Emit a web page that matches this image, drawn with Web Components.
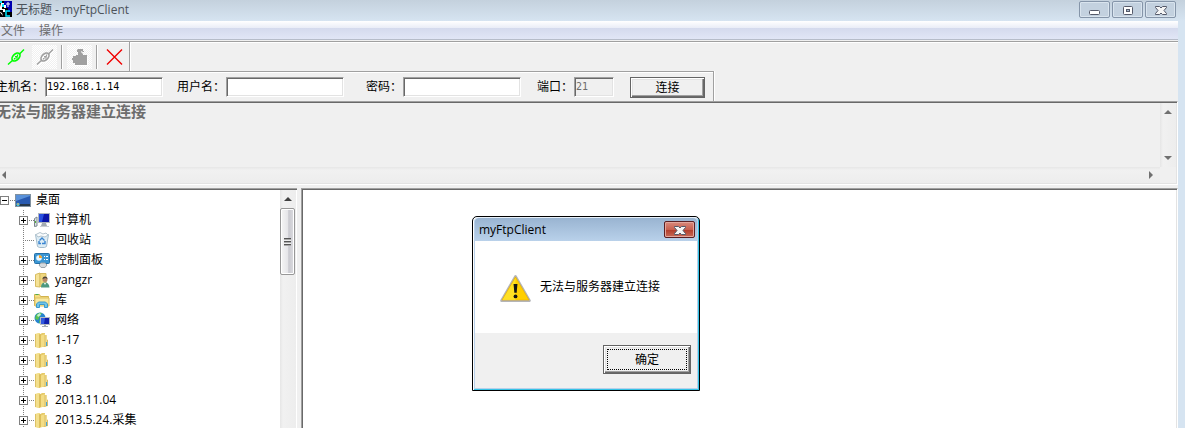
<!DOCTYPE html>
<html lang="zh-CN">
<head>
<meta charset="utf-8">
<title>无标题 - myFtpClient</title>
<style>
    body{
        margin: 0;
        overflow: hidden;
        font: 12px/20px "Open Sans", "Noto Sans CJK SC", sans-serif;
        color: #000;
        --face: #f0f0f0;
        --shade: #a0a0a0;
        --dark: #696969;
        --light: #e3e3e3;
    }
</style>
</head>
<body>
<ftp-window></ftp-window>

<script>
// shared by every component
const _base = /* html */`
    <style>
        *{ box-sizing: border-box; }
        :host{ display: block; box-sizing: border-box; }
        button, input{
            font: inherit;
            color: inherit;
            margin: 0;
            padding: 0;
            border: 0;
            border-radius: 0;
            background: none;
            outline: none;
        }
    </style>
`

function define(name, template, setup) {
    customElements.define(name, class extends HTMLElement{
        constructor() {
            super();
            const shadow = this.attachShadow({ mode: "open" });
            shadow.innerHTML = _base + (typeof template == "function" ? template(this) : template);
            if (setup) setup(this, shadow);
        }
    });
}

const plug = `
    <path d="M0 15.500 5 11M11 5.500 16 .5" stroke-width="1.500"/>
    <ellipse cx="8" cy="8" rx="4.800" ry="3" transform="rotate(-45 8 8)" stroke-width="1.700"/>
    <path d="M7 7.500h2v1.500H7M9.500 5.500v2M6.500 9v1.500" stroke-width="1.200"/>`;

const ICONS = {
    app: `<rect width="16" height="16" fill="#000"/>
        <path d="M8 0h8v11h-4V7H8z" fill="#0000b0"/>
        <path d="M5 2h3v2h2v3H8V5H6v3h3v3H7V9H4V6M3 10l3 2 1 3" fill="#fff"/>
        <path d="M6 3h2v3H6zM4 0h2v2H4z" fill="#00e5ff"/>
        <path d="M14 10h-4v5h4" fill="none" stroke="#00e5ff" stroke-width="1.500"/>
        <path d="M12 1v5M10 3h4" stroke="#fff"/>`,
    link: `<g fill="none" stroke="#00ff00">${plug}</g>`,
    unlink: `<g fill="none" stroke="#fff" transform="translate(1 1)">${plug}</g><g fill="none" stroke="#a0a0a0">${plug}</g>`,
    stop: `<path d="M6 6V3H5V1l1-1h5v2h1v1h-1L9 2v1l2 2v1h4v10H3v-2H1v-3H0V9h1V7h3V6z" fill="#a0a0a0"/>
        <path d="M15.500 7v9.500H3" fill="none" stroke="#fff"/>`,
    cross: `<path d="M0 .5 7.500 8l7.500 7.500M0 15.500 7.500 8 15 .5" fill="none" stroke="#f00000" stroke-width="1.400"/>`,
    desktop: `<rect x=".5" y="2.500" width="15" height="12" fill="#2459ad" stroke="#81919f"/>
        <path d="M1 3h14v4L5 12H1z" fill="#5991d9"/><path d="M1 9 15 4v8H1z" fill="#2859b0"/>
        <path d="M1 12h14v2H1z" fill="#26374a"/><circle cx="3" cy="12.500" r="1.700" fill="#43c0e6"/><path d="M3 11v2" stroke="#f3a23c"/>`,
    computer: `<path d="M.5 6.500 3 5v9l-2.500.5z" fill="#dce3e6" stroke="#7b878e"/><path d="M1.500 9v2" stroke="#56b13b"/>
        <rect x="4.500" y="1.500" width="11" height="9" fill="#0b16a8" stroke="#b0b6bd"/>
        <path d="M5 2h5L8 10H5z" fill="#284fe0"/><path d="M8 11h4l1 3H7z" fill="#a3abb2"/><path d="M6 14.500h9" stroke="#c8cdd2"/>`,
    bin: `<path d="M1.500 2.500h13l-2 12-2 1h-5l-2-1z" fill="#dcecf5" stroke="#a5bccb"/>
        <path d="M2 2.500 6 .5l3 1.500 3-1 2 2-3 2-4-1-3 1z" fill="#fafcfd" stroke="#b3c3cd"/>
        <path d="M5.500 8.500 8 6l2.500 2.500M11 9v2.500H8M7 11.500H5V9" fill="none" stroke="#3984d1" stroke-width="1.400"/>`,
    control: `<rect x=".5" y="1.500" width="15" height="10" rx="1" fill="#3b96d3" stroke="#2570a8"/>
        <circle cx="5" cy="6" r="2.800" fill="#e9f6fd"/><path d="M5 6V3a3 3 0 0 1 3 3z" fill="#f4a32a"/>
        <path d="M10 4.500h1M12 4.500h2M10 7.500h1M12 7.500h2" stroke="#fff"/>
        <path d="M5 13l2-2h4l2 2-2 2.500H7z" fill="#d5dade" stroke="#9ba4ab"/>`,
    user: `<path d="M1.500 2.500 6 1v14l-4.500-.5z" fill="#f5e296" stroke="#d7bc61"/><path d="M6 1.500h6v13H6z" fill="#efd77f" stroke="#d7bc61"/>
        <circle cx="11" cy="7.500" r="2.500" fill="#b98966"/><path d="M8.500 7a2.500 2.500 0 0 1 5 0l-2-1z" fill="#4c4438"/>
        <path d="M7 15.500q0-5 4-5t4.500 5z" fill="#4d9880"/><path d="M10 11l1 2 1-2z" fill="#fff"/>`,
    library: `<path d="M.5 2.500h5l1 2h8v9H.5z" fill="#f5dd80" stroke="#d2b34e"/><path d="M1.500 2.500h3" stroke="#4cae51"/>
        <path d="M1 6h14v8H1z" fill="#f9e9a0" stroke="#dec163"/>
        <path d="M2.500 15.500V12l2-2h7l2 2v3.500h-3V12.500H5.500v3z" fill="#70c4e8" stroke="#3a99cb"/>`,
    network: `<circle cx="6" cy="6" r="5.500" fill="#2684cf"/><path d="M2 3q3-3 6-2L6 4 4 8 1 7zM6 6l3 1-2 4H5z" fill="#5bc34f"/>
        <path d="M3 3 6 1l1 2-3 2z" fill="#c6f0d2"/><rect x="6.500" y="5.500" width="9" height="7" fill="#1020ad" stroke="#b3bac2"/>
        <path d="M7 6h4l-1 6H7z" fill="#3158de"/><path d="M10 13h2v1h2v1H8v-1h2z" fill="#a3abb2"/>`,
    folder: `<path d="M1 2 4 1h2v15H4l-3-1z" fill="#f3df8c"/>
        <path d="M1.500 2v13" stroke="#dcc165"/>
        <path d="M5 3 8 1h3v14H7l-2 1z" fill="#e6cb6a"/>
        <path d="M7 3.500 11 2v12l-4 1.500z" fill="#f3dd86"/>
        <path d="M6 2v13.500" stroke="#d2b24f"/>
        <path d="M11 3h2v4l1 1v6l-3 1z" fill="#f0dc92"/>
        <path d="M11 3v12M13.500 8v6" stroke="#d9be66"/>
        <path d="M12.500 10v4" stroke="#45a5da"/>`,
    min: `<rect x="2.500" y="8.500" width="10" height="4" rx="1" fill="#fff" stroke="#545969"/>`,
    max: `<rect x="3.500" y="4.500" width="9" height="8" rx="1" fill="#fff" stroke="#545969"/><rect x="6.500" y="7.500" width="3" height="2" fill="#a9bace" stroke="#545969"/>`,
    close: `<path d="M2.500 4.500h4L8 6l1.500-1.500h4v1L11 8.500l2.500 3v1h-4L8 11l-1.500 1.500h-4v-1L5 8.500l-2.500-3z" fill="#f5f5f5" stroke="#545969"/>`,
    warning: `<path d="M8 2.300 15.200 14.800H.8z" fill="#ffd20d" stroke="#b4b5b8" stroke-width="1.400" stroke-linejoin="round"/>
        <path d="M8 2.500 15 14.500H1z" fill="#ffcf00" stroke="#e5a900" stroke-width=".3"/>
        <path d="M8 3v11.500H1.300z" fill="#ffeb3c" opacity=".6"/>
        <path d="M7 6.200h2l-.4 4.500H7.400z" fill="#141414"/><circle cx="8" cy="12.600" r="1" fill="#141414"/>`
};

define("win-icon", /* html */`
    <style>
        :host{ flex: none; width: 16px; height: 16px; }
        svg{ display: block; width: 100%; height: 100%; overflow: visible; }
    </style>
    <svg viewBox="0 0 16 16" aria-hidden="true"></svg>
`, (el, shadow) => {
    shadow.querySelector("svg").innerHTML = ICONS[el.getAttribute("name")];
});

define("title-bar", /* html */`
    <style>
        :host{
            display: flex;
            height: 21px;
            overflow: hidden;
            color: #4c535a;
            background: linear-gradient(#c4d1dd, #d6e4f1);
        }
        .app{ margin: 1px 4px 0 -4px; }
        .text{ flex: 1; }
        .buttons{ display: flex; gap: 2px; padding: 1px 9px 0 0; }
        button{
            width: 31px;
            height: 17px;
            display: grid;
            place-content: center;
            border: 1px solid #8595a9;
            border-radius: 2px;
            box-shadow: inset 0 0 0 1px #d9e4ee;
            background: #c3d1df;
        }
    </style>
    <win-icon class="app" name="app"></win-icon>
    <div class="text"><slot></slot></div>
    <div class="buttons">
        <button aria-label="最小化"><win-icon name="min"></win-icon></button>
        <button aria-label="最大化"><win-icon name="max"></win-icon></button>
        <button aria-label="关闭"><win-icon name="close"></win-icon></button>
    </div>
`);

define("menu-bar", /* html */`
    <style>
        :host{
            display: flex;
            gap: 14px;
            padding-left: 1px;
            height: 19px;
            color: #6d6d6d;
            border-bottom: 1px solid #b6bcc9;
            background: linear-gradient(#fff, #e9edf7 7px, #d4daed 7px, #e1e6f6);
        }
        button{ line-height: 20px; }
    </style>
    <button>文件</button>
    <button>操作</button>
`);

define("tool-bar", /* html */`
    <style>
        :host{
            display: flex;
            align-items: center;
            gap: 4px;
            padding-left: 3px;
            margin-top: 1px;
            height: 30px;
            border-top: 1px solid var(--shade);
            box-shadow: inset 0 1px #fff;
        }
        button{
            width: 25px;
            height: 24px;
            display: grid;
            place-content: center;
        }
        button:disabled{ background: repeating-conic-gradient(#fff 0 25%, #f0f0f0 0 50%) 0 0 / 2px 2px; }
        i{ width: 2px; height: 24px; border-left: 1px solid var(--shade); border-right: 1px solid #fff; }
        .end{ align-self: stretch; height: auto; margin-left: -2px; }
    </style>
    <button aria-label="连接"><win-icon name="link"></win-icon></button>
    <button aria-label="断开" disabled><win-icon name="unlink"></win-icon></button>
    <i></i>
    <button aria-label="停止" disabled><win-icon name="stop"></win-icon></button>
    <i></i>
    <button aria-label="删除"><win-icon name="cross"></win-icon></button>
    <i class="end"></i>
`);

define("connect-bar", /* html */`
    <style>
        :host{
            width: max-content;
            height: 30px;
            padding: 5px 8px 0 0;
            border-top: 1px solid var(--shade);
            border-right: 1px solid var(--shade);
            box-shadow: inset 0 1px #fff, 1px 0 #fff;
        }
        form{
            display: grid;
            grid-template-columns: 45px 118px 63px 118px 59px 118px 53px 40px 16px 75px;
        }
        label{
            display: flex;
            justify-content: flex-end;
            padding-right: 1px;
            white-space: nowrap;
        }
        input{
            width: 100%;
            height: 20px;
            padding: 0 1px;
            font-family: "DejaVu Sans Mono", monospace;
            font-size: 10px;
            background: #fff;
            border: 1px solid;
            border-color: var(--shade) #fff #fff var(--shade);
            box-shadow: inset 1px 1px var(--dark), inset -1px -1px var(--light);
        }
        input:disabled{ color: #6d6d6d; background: var(--face); }
        button{
            grid-column: 10;
            height: 21px;
            line-height: 18px;
            border: 1px solid #646464;
            box-shadow: inset 1px 1px #fff, inset -1px -1px var(--dark), inset -2px -2px var(--shade), inset 2px 2px var(--light);
        }
    </style>
    <form onsubmit="return false">
        <label for="host">主机名：</label><input id="host" value="192.168.1.14">
        <label for="user">用户名：</label><input id="user">
        <label for="pass">密码：</label><input id="pass" type="password">
        <label for="port">端口：</label><input id="port" value="21" disabled>
        <button>连接</button>
    </form>
`);

define("scroll-strip", /* html */`
    <style>
        :host{
            display: flex;
            flex-direction: column;
            justify-content: space-between;
            width: 16px;
            background: linear-gradient(90deg, #e6e6e6, #f1f1f1 3px, #ededed);
        }
        :host([horizontal]){
            flex-direction: row;
            width: auto;
            height: 16px;
            background: linear-gradient(#e6e6e6, #f1f1f1 3px, #ededed);
        }
        button{ width: 16px; height: 18px; display: grid; place-content: center; }
        :host([horizontal]) button{ width: 8px; height: 16px; }
        button::before{
            content: "";
            width: 8px;
            height: 4px;
            background: var(--arrow, #707070);
            clip-path: polygon(50% 0, 100% 100%, 0 100%);
        }
        button:last-child::before{ clip-path: polygon(0 0, 100% 0, 50% 100%); }
        :host([horizontal]) button::before{ width: 4px; height: 8px; clip-path: polygon(0 50%, 100% 0, 100% 100%); }
        :host([horizontal]) button:last-child::before{ clip-path: polygon(0 0, 100% 50%, 0 100%); }
        .track{ flex: 1; }
    </style>
    <button aria-label="向前"></button>
    <div class="track"><slot></slot></div>
    <button aria-label="向后"></button>
`);

define("log-pane", /* html */`
    <style>
        :host{
            display: grid;
            grid-template-columns: 1fr 16px;
            grid-template-rows: 64px 16px;
            padding: 1px 1px 1px 0;
            border-top: 1px solid var(--shade);
            border-bottom: 1px solid #fff;
            border-right: 1px solid #fff;
            box-shadow: inset 0 1px var(--dark), inset -1px -1px var(--light);
        }
        .log{
            margin-left: -4px;
            font-size: 15px;
            font-weight: bold;
            line-height: 16px;
            color: #6d6d6d;
        }
        scroll-strip[horizontal]{ padding-right: 5px; }
    </style>
    <div class="log"><slot></slot></div>
    <scroll-strip></scroll-strip>
    <scroll-strip horizontal></scroll-strip>
`);

define("tree-item", el => /* html */`
    <style>
        .row{ display: flex; align-items: center; height: 20px; white-space: nowrap; }
        :host([child]) .row{
            padding-left: 19px;
            background: repeating-linear-gradient(#808080 0 1px, transparent 1px 2px) 23px 0 / 1px 100% no-repeat;
        }
        .box{
            flex: none;
            width: 9px;
            height: 9px;
            border: 1px solid #808080;
            background:
                linear-gradient(#000, #000) 1px 3px / 5px 1px no-repeat,
                linear-gradient(#000, #000) 3px 1px / 1px 5px no-repeat,
                #fff;
        }
        .box.open{ background: linear-gradient(#000, #000) 1px 3px / 5px 1px no-repeat, #fff; }
        .dots{
            flex: none;
            width: 6px;
            height: 1px;
            background: repeating-linear-gradient(90deg, transparent 0 1px, #808080 1px 2px);
        }
        .leaf{ width: 10px; margin-left: 5px; }
        win-icon{ margin-right: 5px; }
    </style>
    <div class="row">
        ${el.hasAttribute("leaf")
            ? `<span class="dots leaf"></span>`
            : `<button class="box ${el.hasAttribute("open") ? "open" : ""}" aria-label="展开"></button><span class="dots"></span>`}
        <win-icon name="${el.getAttribute("icon")}"></win-icon>
        <slot></slot>
    </div>
`);

define("folder-tree", /* html */`
    <style>
        :host{
            display: flex;
            width: 297px;
            /* the pane runs on below the window's lower edge */
            margin-bottom: -24px;
            padding: 1px 1px 0 0;
            background: #fff;
            border-top: 1px solid var(--shade);
            box-shadow: inset 0 1px var(--dark), inset -1px 0 #fff;
            overflow: hidden;
        }
        .items{ flex: 1; overflow: hidden; }
        scroll-strip{ --arrow: #404040; }
        .thumb{
            height: 67px;
            width: 15px;
            display: grid;
            place-content: center;
            border: 1px solid #979797;
            border-radius: 2px;
            box-shadow: inset 0 0 0 1px #fff;
            background: linear-gradient(90deg, #f5f5f5, #e6e6e9 50%, #c9c9cf 60%, #dcdce0);
        }
        .thumb::before{
            content: "";
            width: 7px;
            height: 8px;
            background: repeating-linear-gradient(#555 0 1px, #aaa 1px 2px, #eee 2px 3px);
        }
    </style>
    <div class="items">
        <tree-item icon="desktop" open>桌面</tree-item>
        <tree-item child icon="computer">计算机</tree-item>
        <tree-item child icon="bin" leaf>回收站</tree-item>
        <tree-item child icon="control">控制面板</tree-item>
        <tree-item child icon="user">yangzr</tree-item>
        <tree-item child icon="library">库</tree-item>
        <tree-item child icon="network">网络</tree-item>
        <tree-item child icon="folder">1-17</tree-item>
        <tree-item child icon="folder">1.3</tree-item>
        <tree-item child icon="folder">1.8</tree-item>
        <tree-item child icon="folder">2013.11.04</tree-item>
        <tree-item child icon="folder">2013.5.24.采集</tree-item>
    </div>
    <scroll-strip><div class="thumb"></div></scroll-strip>
`);

define("message-dialog", /* html */`
    <style>
        :host{
            width: 228px;
            border: 1px solid #000;
            border-radius: 5px 5px 0 0;
            background: #b9d1ea;
            box-shadow: inset 1px 1px #fff, inset -1px -1px #35c3e6;
            padding: 0 2px 2px;
        }
        header{
            display: flex;
            justify-content: space-between;
            align-items: center;
            height: 24px;
            padding: 0 2px 0 4px;
            background: linear-gradient(#99b4d1, #b9d1ea);
            border-top: 1px solid #e8f1fa;
            border-radius: 4px 4px 0 0;
        }
        header button{
            width: 31px;
            height: 17px;
            display: grid;
            place-content: center;
            border: 1px solid #5b1f22;
            border-radius: 2px;
            box-shadow: inset 0 0 0 1px #e3a69c;
            background: linear-gradient(#d98a7d, #c7604f 50%, #b23a28 50%, #c66a57);
        }
        .message{
            display: flex;
            align-items: center;
            gap: 9px;
            height: 92px;
            padding-left: 25px;
            background: #fff;
        }
        .message win-icon{ width: 31px; height: 31px; }
        footer{
            display: flex;
            justify-content: flex-end;
            padding: 12px 6px 14px;
            background: var(--face);
        }
        footer button{
            width: 88px;
            height: 29px;
            padding: 3px;
            border: 1px solid #646464;
            box-shadow: inset 1px 1px #fff, inset -1px -1px var(--dark), inset -2px -2px var(--shade), inset 2px 2px var(--light);
        }
        footer span{ display: block; height: 21px; border: 1px dotted #000; }
    </style>
    <header><slot name="title"></slot><button aria-label="关闭"><win-icon name="close"></win-icon></button></header>
    <div class="message"><win-icon name="warning"></win-icon><slot></slot></div>
    <footer><button><span>确定</span></button></footer>
`);

define("ftp-window", /* html */`
    <style>
        :host{
            display: flex;
            flex-direction: column;
            height: 100vh;
            overflow: hidden;
            background: #d6e4f1;
        }
        .client{
            flex: 1;
            min-height: 0;
            display: flex;
            flex-direction: column;
            margin-right: 7px;
            background: var(--face);
        }
        .panes{ flex: 1; min-height: 0; display: flex; gap: 4px; margin-top: 3px; }
        .files{
            flex: 1;
            background: #fff;
            border: 1px solid;
            border-color: var(--shade) #fff #fff var(--shade);
            border-bottom: 0;
            box-shadow: inset 1px 1px var(--dark), inset -1px 0 var(--light);
        }
        /* floats over the file list */
        message-dialog{ position: absolute; left: 472px; top: 216px; }
    </style>
    <title-bar>无标题 - myFtpClient</title-bar>
    <div class="client">
        <menu-bar></menu-bar>
        <tool-bar></tool-bar>
        <connect-bar></connect-bar>
        <log-pane>无法与服务器建立连接</log-pane>
        <div class="panes">
            <folder-tree></folder-tree>
            <div class="files"></div>
        </div>
    </div>
    <message-dialog><span slot="title">myFtpClient</span>无法与服务器建立连接</message-dialog>
`);
</script>
</body>
</html>
